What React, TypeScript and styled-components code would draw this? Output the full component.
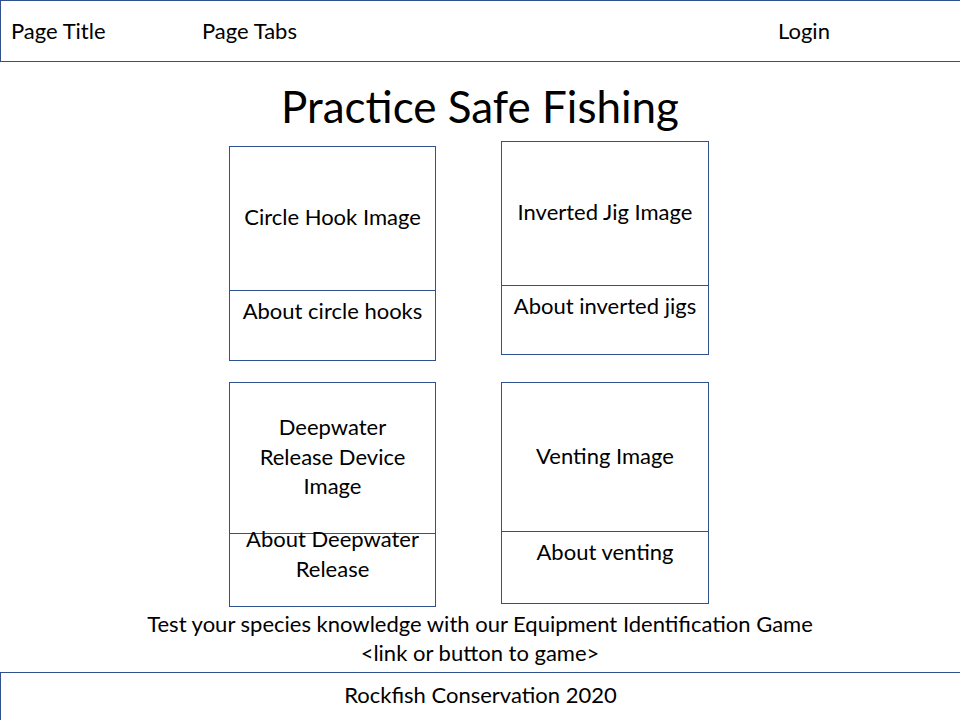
import styled, { createGlobalStyle } from "styled-components";

// #region Style

const GlobalStyle = createGlobalStyle`
  html, body {
    margin: 0;
    padding: 0;
    background: #ffffff;
    overflow: hidden;
  }

  body {
    font-family: Lato, "Liberation Sans", sans-serif;
    color: #000000;
  }
`;

const lineBlue = "#2f528f";

const Page = styled.div`
  width: 960px;
  height: 720px;
  display: flex;
  flex-direction: column;
`;

const Header = styled.header`
  height: 62px;
  box-sizing: border-box;
  padding: 0 0 2px 10px;
  border-top: 1px solid ${lineBlue};
  border-left: 1px solid ${lineBlue};
  border-bottom: 1px solid ${lineBlue};
  display: flex;
  align-items: center;
  font-size: 22px;
`;

const HeaderItem = styled.span<{ $width: number }>`
  width: ${(p) => p.$width}px;
  flex: none;
`;

const Main = styled.main`
  flex: 1;
  display: flex;
  flex-direction: column;
  align-items: center;
`;

const Title = styled.h1`
  margin: 18px 0 2px;
  font-size: 44px;
  font-weight: 400;
  line-height: 52px;
`;

const CardGrid = styled.div`
  display: grid;
  grid-template-columns: 207px 208px;
  column-gap: 65px;
  row-gap: 21px;
  align-items: start;
  margin-top: 7px;
  margin-right: 22px;
`;

const Card = styled.section<{ $offset: number; $height: number }>`
  margin-top: ${(p) => p.$offset}px;
  height: ${(p) => p.$height}px;
  box-sizing: border-box;
  border: 1px solid ${lineBlue};
  display: flex;
  flex-direction: column;
  font-size: 22px;
  line-height: 29.5px;
  text-align: center;
`;

const ImageArea = styled.div<{ $height: number }>`
  height: ${(p) => p.$height}px;
  flex: none;
  box-sizing: border-box;
  border-bottom: 1px solid ${lineBlue};
  display: flex;
  align-items: center;
  justify-content: center;
  padding: 0 14px 3px;
`;

const AboutArea = styled.div`
  height: 42px;
  box-sizing: border-box;
  display: flex;
  align-items: center;
  justify-content: center;
  padding: 0 6px 3px;
`;

const GameText = styled.div`
  margin-top: 2px;
  font-size: 22px;
  line-height: 29px;
  text-align: center;
`;

const Footer = styled.footer`
  height: 48px;
  box-sizing: border-box;
  border-top: 1px solid ${lineBlue};
  border-left: 1px solid ${lineBlue};
  display: flex;
  align-items: center;
  justify-content: center;
  padding-bottom: 4px;
  font-size: 22px;
`;

// #endregion

interface ICard {
  image: string;
  about: string;
  offset: number;
  height: number;
  imageHeight: number;
}

const cards: ICard[] = [
  { image: "Circle Hook Image", about: "About circle hooks", offset: 5, height: 215, imageHeight: 144 },
  { image: "Inverted Jig Image", about: "About inverted jigs", offset: 0, height: 214, imageHeight: 144 },
  {
    image: "Deepwater Release Device Image",
    about: "About Deepwater Release",
    offset: 0,
    height: 225,
    imageHeight: 151,
  },
  { image: "Venting Image", about: "About venting", offset: 0, height: 222, imageHeight: 149 },
];

export default function App() {
  return (
    <Page>
      <GlobalStyle />
      <Header>
        <HeaderItem $width={191}>Page Title</HeaderItem>
        <HeaderItem $width={576}>Page Tabs</HeaderItem>
        <HeaderItem $width={100}>Login</HeaderItem>
      </Header>
      <Main>
        <Title>Practice Safe Fishing</Title>
        <CardGrid>
          {cards.map((c) => (
            <Card key={c.image} $offset={c.offset} $height={c.height}>
              <ImageArea $height={c.imageHeight}>{c.image}</ImageArea>
              <AboutArea>{c.about}</AboutArea>
            </Card>
          ))}
        </CardGrid>
        <GameText>
          Test your species knowledge with our Equipment Identification Game
          <br />
          &lt;link or button to game&gt;
        </GameText>
      </Main>
      <Footer>Rockfish Conservation 2020</Footer>
    </Page>
  );
}
